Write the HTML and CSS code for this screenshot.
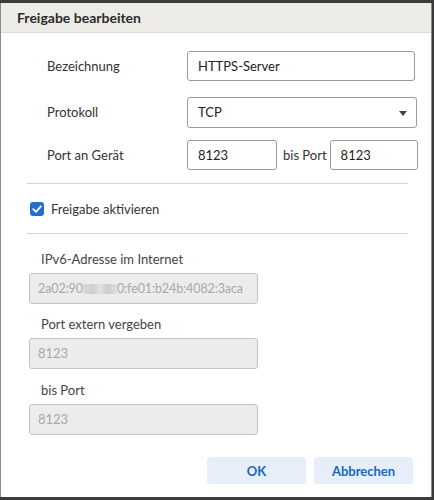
FILE: index.html
```html
<!DOCTYPE html>
<html lang="de">
<head>
<meta charset="utf-8">
<link rel="stylesheet" href="styles.css">
</head>
<body>
<div class="dialog">
  <div class="header">Freigabe bearbeiten</div>
  <div class="body">
    <div class="row r1">
      <span class="label">Bezeichnung</span>
      <div class="field wide">HTTPS-Server</div>
    </div>
    <div class="row r2">
      <span class="label">Protokoll</span>
      <div class="field select">TCP<span class="caret"></span></div>
    </div>
    <div class="row r3">
      <span class="label">Port an Gerät</span>
      <div class="field port">8123</div>
      <span class="bis">bis Port</span>
      <div class="field port2">8123</div>
    </div>
    <div class="divider d1"></div>
    <div class="check-row">
      <span class="checkbox"><svg width="14" height="14" viewBox="0 0 14 14"><path d="M3.2 7.2 L5.9 9.9 L10.9 4.3" fill="none" stroke="#fff" stroke-width="1.8" stroke-linecap="round" stroke-linejoin="round"/></svg></span>
      <span class="check-label">Freigabe aktivieren</span>
    </div>
    <div class="divider d2"></div>
    <div class="group g1">
      <div class="sublabel">IPv6-Adresse im Internet</div>
      <div class="field disabled">2a02:90<span class="blur"></span>0:fe01:b24b:4082:3aca</div>
    </div>
    <div class="group g2">
      <div class="sublabel">Port extern vergeben</div>
      <div class="field disabled">8123</div>
    </div>
    <div class="group g3">
      <div class="sublabel">bis Port</div>
      <div class="field disabled">8123</div>
    </div>
    <div class="buttons">
      <button class="btn">OK</button>
      <button class="btn">Abbrechen</button>
    </div>
  </div>
</div>
</body>
</html>
```
FILE: styles.css
```css
html, body {
  margin: 0;
  padding: 0;
}
body {
  background: #3b3b3b;
  width: 434px;
  height: 500px;
  overflow: hidden;
  font-family: "Lato", "Open Sans", sans-serif;
  color: #333;
}
.dialog {
  margin-top: 3px;
  width: 430px;
  height: 494px;
  background: #fff;
  border-left: 1px solid #8a8a8a;
  border-right: 1px solid #8a8a8a;
  display: flex;
  flex-direction: column;
}
.header {
  height: 29px;
  flex: none;
  background: #ecebe6;
  border-bottom: 1px solid #dcdcd6;
  font-weight: bold;
  font-size: 14px;
  line-height: 29px;
  padding-left: 16px;
  color: #2c2c2c;
}
.body {
  display: flex;
  flex-direction: column;
  padding-left: 28px;
}
.row {
  display: flex;
  align-items: center;
  height: 30px;
}
.r1 { margin-top: 18px; }
.r2 { margin-top: 16px; }
.r3 { margin-top: 13px; }
.label {
  width: 158px;
  padding-left: 18px;
  box-sizing: border-box;
  font-size: 13px;
  color: #333;
  flex: none;
}
.field {
  box-sizing: border-box;
  height: 30px;
  border: 1px solid #9a9a9a;
  border-radius: 3px;
  font-size: 13px;
  line-height: 28px;
  padding-left: 10px;
  color: #222;
  position: relative;
}
.wide { width: 228px; }
.select { width: 230px; height: 31px; line-height: 29px; }
.caret {
  position: absolute;
  right: 9px;
  top: 13px;
  width: 0;
  height: 0;
  border-left: 4px solid transparent;
  border-right: 4px solid transparent;
  border-top: 5px solid #444;
}
.port { width: 90px; flex: none; }
.bis {
  font-size: 13px;
  margin-left: 6px;
  margin-right: 3px;
  color: #333;
}
.port2 { width: 88px; flex: none; }
.divider {
  height: 1px;
  background: #d4d4d4;
  width: 381px;
  margin-left: -2px;
}
.d1 { margin-top: 13px; }
.check-row {
  display: flex;
  align-items: center;
  height: 49px;
}
.checkbox {
  width: 14px;
  height: 14px;
  border-radius: 3px;
  background: #1f6fd0;
  display: flex;
  margin-left: 1px;
}
.check-label {
  font-size: 13px;
  margin-left: 7px;
  color: #333;
}
.group {
  display: flex;
  flex-direction: column;
}
.sublabel {
  font-size: 13px;
  color: #444;
  padding-left: 12px;
  height: 18px;
  line-height: 18px;
}
.g1 { margin-top: 16px; }
.g1 .sublabel { margin-bottom: 5px; }
.g2 { margin-top: 11px; }
.g2 .sublabel { margin-bottom: 5px; }
.g3 { margin-top: 12px; }
.g3 .sublabel { margin-bottom: 5px; }
.disabled {
  width: 229px;
  height: 31px;
  line-height: 29px;
  background: #ececec;
  border-color: #c4c4c4;
  color: #a8a8a8;
  padding-left: 8px;
  white-space: nowrap;
  overflow: hidden;
}
.g1 .disabled {
  font-size: 12.5px;
  letter-spacing: -0.1px;
}
.blur {
  display: inline-block;
  width: 34px;
  height: 10px;
  vertical-align: -1px;
  background: linear-gradient(90deg, #d9d9d9, #cfcfcf 30%, #e2e2e2 50%, #cdcdcd 70%, #dedede);
}
.buttons {
  display: flex;
  gap: 8px;
  margin-top: 22px;
  padding-left: 178px;
}
.btn {
  width: 99px;
  height: 27px;
  border: none;
  border-radius: 3px;
  background: #e6eff9;
  color: #1a67bd;
  font-family: "Lato", "Open Sans", sans-serif;
  font-weight: bold;
  font-size: 13px;
  padding: 0;
}
```
